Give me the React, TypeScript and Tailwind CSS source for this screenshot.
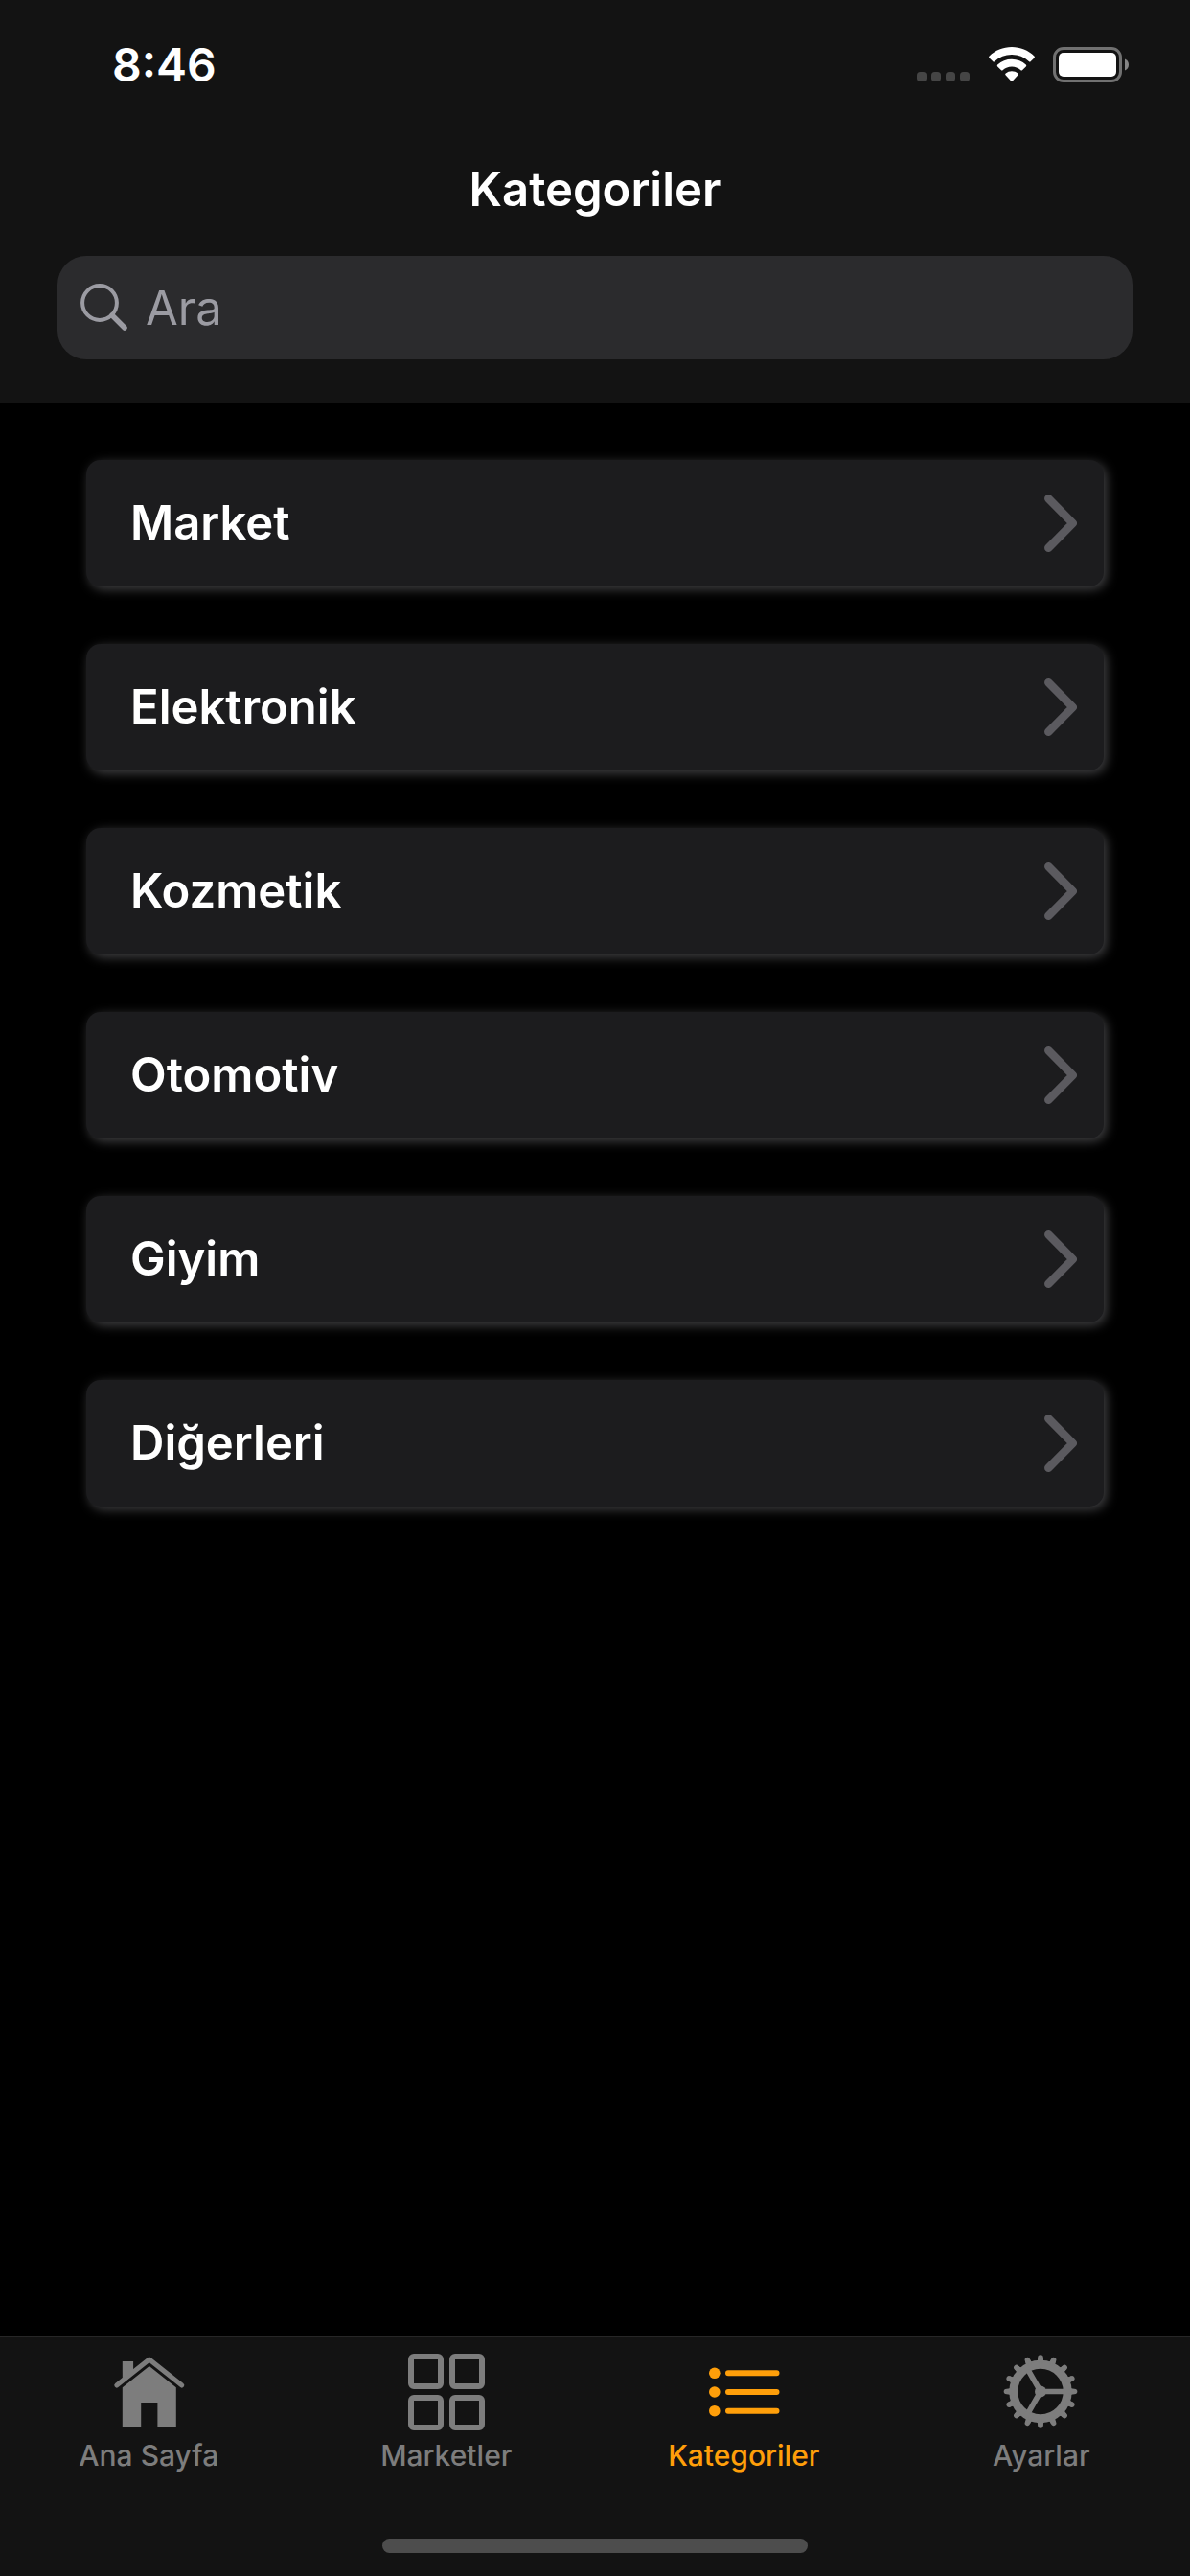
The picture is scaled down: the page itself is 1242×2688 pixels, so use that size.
import { useState, type ReactNode } from "react";
import { clsx } from "clsx";

const categories = ["Market", "Elektronik", "Kozmetik", "Otomotiv", "Giyim", "Diğerleri"];

const gearTeeth = Array.from({ length: 16 }, (_, i) => i * 22.5);

function SignalDots() {
  return (
    <svg viewBox="0 0 56 37" className="w-14 h-[37px]" fill="#454545" aria-hidden="true">
      <rect x="0" y="26" width="10" height="10" rx="3.5" />
      <rect x="15" y="26" width="10" height="10" rx="3.5" />
      <rect x="30" y="26" width="10" height="10" rx="3.5" />
      <rect x="45" y="26" width="10" height="10" rx="3.5" />
    </svg>
  );
}

function WifiIcon() {
  return (
    <svg viewBox="0 0 48 37" className="w-12 h-[37px]" fill="#fff" aria-hidden="true">
      <path d="M24 0C33 0 41.200 3.500 47.400 9.400a1.400 1.400 0 0 1 0 2L43.800 15a1.400 1.400 0 0 1-2 0A25.600 25.600 0 0 0 24 8 25.600 25.600 0 0 0 6.200 15a1.400 1.400 0 0 1-2 0L.6 11.400a1.400 1.400 0 0 1 0-2C6.800 3.500 15 0 24 0Z" />
      <path d="M24 12.800c5.700 0 10.900 2.200 14.800 5.700a1.400 1.400 0 0 1 0 2l-3.600 3.600a1.400 1.400 0 0 1-2 0A13.700 13.700 0 0 0 24 20.600c-3.500 0-6.700 1.300-9.200 3.500a1.400 1.400 0 0 1-2 0l-3.600-3.600a1.400 1.400 0 0 1 0-2A22 22 0 0 1 24 12.800Z" />
      <path d="M24 25.300c2.400 0 4.600.8 6.300 2.200a1.400 1.400 0 0 1 0 2.100L25 35.300a1.400 1.400 0 0 1-2 0l-5.300-5.700a1.400 1.400 0 0 1 0-2.100 10 10 0 0 1 6.300-2.200Z" />
    </svg>
  );
}

function BatteryIcon() {
  return (
    <svg viewBox="0 0 80 37" className="w-20 h-[37px]" aria-hidden="true">
      <rect x="1.500" y="1.500" width="69" height="34" rx="9.500" fill="none" stroke="#717171" strokeWidth="3" />
      <rect x="6" y="6" width="60" height="25" rx="5" fill="#fff" />
      <path d="M75 12.500c2.500 1 4 3.300 4 6s-1.500 5-4 6Z" fill="#858585" />
    </svg>
  );
}

function SearchIcon() {
  return (
    <svg viewBox="0 0 50 50" className="size-[50px] shrink-0" fill="none" stroke="#9b9ba2" strokeLinecap="round" aria-hidden="true">
      <circle cx="20" cy="20" r="17.900" strokeWidth="4" />
      <path d="M33 33 46 46" strokeWidth="5.500" />
    </svg>
  );
}

function ChevronIcon() {
  return (
    <svg viewBox="0 0 34 60" className="w-[34px] h-[60px]" fill="none" stroke="#5b5a5f" strokeWidth="8.500" strokeLinecap="round" strokeLinejoin="round" aria-hidden="true">
      <path d="M4.300 4.300 29.700 30 4.300 55.700" />
    </svg>
  );
}

function HomeIcon() {
  return (
    <svg viewBox="0 0 80 80" className="size-20" fill="currentColor" aria-hidden="true">
      <path d="M12.800 8h11.300v12L12.800 29Z" />
      <path d="M6.800 33 40.800 6 74.800 33" fill="none" stroke="currentColor" strokeWidth="5" strokeLinecap="round" strokeLinejoin="round" />
      <path d="M40.800 13 68.800 35.300V76.700H49.400V51H32.200V76.700H12.800V35.300Z" />
    </svg>
  );
}

function GridIcon() {
  return (
    <svg viewBox="0 0 80 80" className="size-20" fill="none" stroke="currentColor" strokeWidth="6" aria-hidden="true">
      <rect x="3" y="3" width="31" height="31" rx="3" />
      <rect x="46" y="3" width="31" height="31" rx="3" />
      <rect x="3" y="46" width="31" height="31" rx="3" />
      <rect x="46" y="46" width="31" height="31" rx="3" />
    </svg>
  );
}

function ListIcon() {
  return (
    <svg viewBox="0 0 80 80" className="size-20" fill="currentColor" aria-hidden="true">
      <circle cx="9.800" cy="20.300" r="5.800" />
      <circle cx="9.800" cy="40" r="5.800" />
      <circle cx="9.800" cy="59.700" r="5.800" />
      <path d="M24 20.300H74.500M24 40H74.500M24 59.700H74.500" stroke="currentColor" strokeWidth="6" strokeLinecap="round" />
    </svg>
  );
}

function GearIcon() {
  return (
    <svg viewBox="0 0 80 80" className="size-20" fill="none" stroke="currentColor" aria-hidden="true">
      <circle cx="39" cy="39.500" r="28.200" strokeWidth="9" />
      {gearTeeth.map((angle) => (
        <g key={angle} transform={`rotate(${angle} 39 39.5)`}>
          <path d="M39 7.500V4" strokeWidth="5.600" strokeLinecap="round" />
          <path d="M34.500 8.500Q36.400 7.500 36.400 4H41.600Q41.600 7.500 43.500 8.500Z" fill="currentColor" stroke="none" />
        </g>
      ))}
      <path d="M39 39.500H65M39 39.500 26 17M39 39.500 26 62" strokeWidth="5.600" />
      <circle cx="39" cy="39.500" r="6" fill="currentColor" stroke="none" />
    </svg>
  );
}

type Tab = { label: string; icon: ReactNode };

const tabs: Tab[] = [
  { label: "Ana Sayfa", icon: <HomeIcon /> },
  { label: "Marketler", icon: <GridIcon /> },
  { label: "Kategoriler", icon: <ListIcon /> },
  { label: "Ayarlar", icon: <GearIcon /> },
];

export default function App() {
  const [active, setActive] = useState("Kategoriler");
  const [query, setQuery] = useState("");

  const visible = categories.filter((c) =>
    c.toLocaleLowerCase("tr").includes(query.toLocaleLowerCase("tr")),
  );

  return (
    <div className="min-h-screen flex flex-col bg-black text-white font-['Inter',sans-serif]">
      <header className="bg-[#131313] border-b border-[#272727]">
        <div className="h-[132px] pt-[3px] pl-[117px] pr-[63px] flex items-center justify-between">
          <span className="text-[48px] leading-[60px] font-semibold">8:46</span>
          <div className="flex items-center gap-[19px]">
            <SignalDots />
            <WifiIcon />
            <BatteryIcon />
          </div>
        </div>

        <h1 className="h-[132px] flex items-center justify-center text-[49px] leading-[60px] font-semibold">
          Kategoriler
        </h1>

        <label className="mx-[60px] mt-[3px] mb-[45px] h-[108px] px-6 flex items-center gap-[18px] rounded-[30px] bg-[#2b2b2d]">
          <SearchIcon />
          <input
            type="text"
            aria-label="Ara"
            placeholder="Ara"
            value={query}
            onChange={(e) => setQuery(e.target.value)}
            className="flex-1 min-w-0 h-[62px] bg-transparent outline-none text-[49px] leading-[60px] placeholder:text-[#9b9ba2]"
          />
        </label>
      </header>

      <main className="flex-1 px-[90px] pt-[59px] pb-[60px]">
        <ul className="flex flex-col gap-[60px]">
          {visible.map((name) => (
            <li key={name}>
              <button
                type="button"
                className="w-full h-[132px] pl-[46px] pr-7 flex items-center justify-between rounded-[15px] bg-[#1c1c1e] shadow-[3px_3px_12px_#424244]"
              >
                <span className="text-[49px] leading-[60px] font-semibold">{name}</span>
                <ChevronIcon />
              </button>
            </li>
          ))}
        </ul>
      </main>

      <footer className="bg-[#131313] border-t border-[#272727] pt-[17px] pb-6 flex flex-col items-center gap-[69px]">
        <nav className="w-full grid grid-cols-4">
          {tabs.map((tab) => (
            <button
              key={tab.label}
              type="button"
              onClick={() => setActive(tab.label)}
              aria-current={active === tab.label ? "page" : undefined}
              className={clsx(
                "flex flex-col items-center gap-2",
                active === tab.label ? "text-[#ff9f0a]" : "text-[#7d7d7d]",
              )}
            >
              {tab.icon}
              <span className="text-[30px] leading-[36px] font-medium">{tab.label}</span>
            </button>
          ))}
        </nav>
        <div className="w-[444px] h-[15px] rounded-full bg-[#4d4d4d]" />
      </footer>
    </div>
  );
}
